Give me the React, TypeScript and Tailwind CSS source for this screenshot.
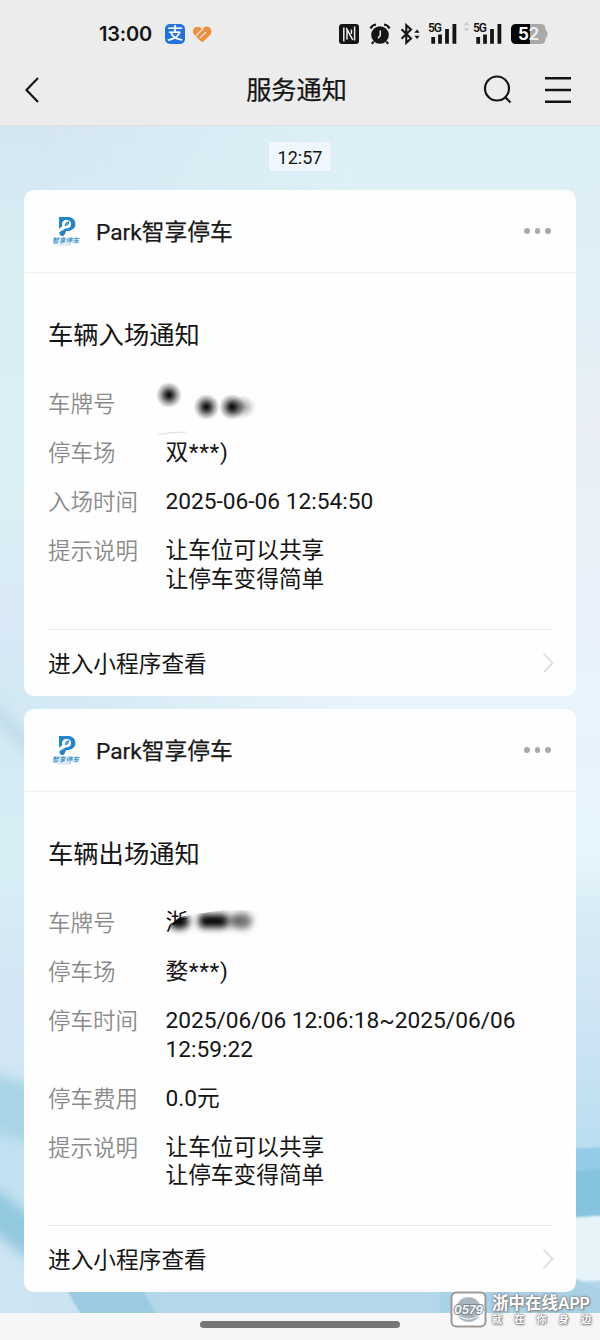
import type { ReactNode } from "react";

type Row = { label: string; lines: string[]; plate?: ReactNode; spaced?: boolean };

const exitTime = ["2025/06/06 12:06:18~2025/06/06", "12:59:22"];
const tips = ["让车位可以共享", "让停车变得简单"];

function Signal() {
  return (
    <svg width="30" height="30" viewBox="0 -4 30 30" className="shrink-0 overflow-visible">
      <text x="0" y="9.4" fontFamily="Roboto" fontWeight="600" fontSize="12" fill="#151515" className="tracking-[-1px]">
        5G
      </text>
      <path d="M5.2 20.7v-6.7M12 20.7v-9.2M19 20.7V6M26.4 20.7V1" stroke="#151515" strokeWidth="3.8" />
    </svg>
  );
}

function StatusBar() {
  return (
    <div className="relative flex h-[68px] items-center pl-[99px]">
      <span className="w-[66px] font-[Inter] text-[20px] font-semibold tracking-[-0.2px] text-[#151515]">13:00</span>
      <span className="flex size-5 items-center justify-center rounded-[5px] bg-[#2272da] text-[16px] leading-none font-medium text-white">
        支
      </span>
      {/* orange heart folded from two ribbons */}
      <svg width="21" height="18" viewBox="0 0 21 18" className="ml-[7px]" fill="none" strokeLinecap="round">
        <path d="M10 4.2C7.5.2 1.5 1.2.9 5.8c-.2 2.4 1.1 4 2.6 5.4l5.2 4.9c1.2 1.1 2.2 1 3.3 0l5.6-5.6c1.5-1.5 2.2-3.1 1.7-5.1C18.2.8 12.5.4 10 4.2z" fill="#ea913f" />
        <path d="M3.2 11.4l8-7.6M8.2 12.6l5.4-5.2" stroke="#ececec" strokeWidth="1.2" />
      </svg>

      <svg width="20" height="20" viewBox="0 0 20 20" className="ml-[126px]">
        <rect width="20" height="20" rx="3" fill="#151515" />
        <path d="M4.8 17.5V3.5M8 15.5V5.5l4.8 8.8M15.6 2.5v14M12.4 5.5v4.5M7.2 3.8l6.6 12" fill="none" stroke="#ececec" strokeWidth="1.5" />
      </svg>
      <svg width="22" height="22" viewBox="0 0 22 22" className="ml-[10px]">
        <circle cx="11" cy="12" r="8.8" fill="#151515" />
        <path d="M1.5 5.5Q3 2 7 1.5M20.5 5.5Q19 2 15 1.5M4.5 18.5L3 21M17.5 18.5L19 21" stroke="#151515" strokeWidth="2.2" fill="none" />
        <path d="M11.3 7.5v5l-2.3 2.8" stroke="#ececec" strokeWidth="1.5" fill="none" />
      </svg>
      <svg width="22" height="22" viewBox="0 0 22 22" className="ml-[9px]">
        <path d="M1.5 6.3l9.5 9.2-4.7 4.3V2.2L11 6.5 1.5 15.7" fill="none" stroke="#151515" strokeWidth="2.1" />
        <path d="M14.3 9.8L17 6.5l2.7 3.3zM14.3 12.8l2.7 3.3 2.7-3.3z" fill="#151515" />
      </svg>
      <div className="ml-[6px] flex items-center">
        <Signal />
        <svg width="7" height="12" viewBox="0 0 7 12" className="mb-4 ml-[5px]">
          <path d="M.5 5.3L3.5 2l3 3.3zM.5 8.2l3 3.3 3-3.3z" fill="#c9c9c9" />
        </svg>
        <div className="ml-[3px]">
          <Signal />
        </div>
      </div>
      <div className="relative ml-[8px] flex h-5 w-[37px] items-center">
        <svg width="37" height="20" viewBox="0 0 37 20" className="absolute inset-0">
          <path d="M18 0h12a4.5 4.5 0 0 1 4.5 4.5V6l2 2v4l-2 2v1.5A4.5 4.5 0 0 1 30 20H18z" fill="#a9a9a9" />
          <path d="M19 0H4.5A4.5 4.5 0 0 0 0 4.5v11A4.5 4.5 0 0 0 4.5 20H19z" fill="#050505" />
        </svg>
        <span className="relative pl-[7px] font-[Inter] text-[17px] leading-5 font-bold tracking-[-0.5px] text-white">
          5<span className="text-[#ececec]">2</span>
        </span>
      </div>
    </div>
  );
}

function NavBar() {
  return (
    <div className="flex h-[58px] items-center border-b border-[#dfe2e4] pb-[14px]">
      <svg width="16" height="28" viewBox="0 0 16 28" className="ml-[24px]" fill="none" stroke="#151515" strokeWidth="2.2">
        <path d="M14 2L2.5 14 14 26" />
      </svg>
      <h1 className="flex-1 pt-[3px] pl-[70px] text-center text-[25.2px] text-[#151515] [-webkit-text-stroke:0.25px_#151515]">服务通知</h1>
      <svg width="30" height="32" viewBox="0 0 30 32" fill="none" stroke="#151515" strokeWidth="2.2">
        <circle cx="14" cy="14.5" r="12" />
        <path d="M22.5 23.5l5 5" />
      </svg>
      <svg width="26" height="28" viewBox="0 0 26 28" className="mr-[29px] ml-[32px]" stroke="#151515" strokeWidth="2.4">
        <path d="M0 2.3h26M0 14h26M0 25.8h26" />
      </svg>
    </div>
  );
}

function ParkLogo() {
  return (
    <svg width="28" height="30" viewBox="0 0 28 30" className="shrink-0">
      <path d="M7 1h9.5a6.9 6.9 0 0 1 0 13.9h-2.3l-1.6 3.6a2.7 2.7 0 0 1-5.1-1.4L7 12z" fill="#2484c8" />
      <path d="M14.8 3.9a4.2 4.2 0 0 1 1 8.3l-2.4.2L6 17.5v-4l4.5-3.6a4.2 4.2 0 0 1 4.3-6z" fill="#fefefe" />
      <path d="M13.2 9.8q0-3.2 3.4-4.2 .6 3.4-3.4 4.2z" fill="#2484c8" stroke="#2484c8" strokeWidth="0.8" />
      <path d="M14.2 8.8l1.4-1.6" stroke="#cfe6ee" strokeWidth="0.7" />
      <path d="M7.4 16.5l2.6-2.2v4.5a2.6 2.6 0 0 1-2.6-2.3z" fill="#2484c8" />
      <text x="0" y="26.8" fontFamily="'Noto Sans CJK SC'" fontWeight="700" fontStyle="italic" fontSize="6.8" textLength="27" fill="#3a91c9">
        智享停车
      </text>
      <path d="M6 28.8h13" stroke="#9bd0e4" strokeWidth="0.7" />
    </svg>
  );
}

/** Smudged-out plate number on the entry card. */
function EntryPlate() {
  return (
    <svg width="120" height="70" viewBox="0 0 120 70" className="absolute -top-[14px] -left-[12px]">
      <defs>
        <radialGradient id="smudge">
          <stop offset="0" stopColor="#000" />
          <stop offset="0.3" stopColor="#000" stopOpacity="0.74" />
          <stop offset="0.65" stopColor="#000" stopOpacity="0.32" />
          <stop offset="1" stopColor="#000" stopOpacity="0" />
        </radialGradient>
      </defs>
      <circle cx="15" cy="19" r="13" fill="url(#smudge)" />
      <circle cx="52.5" cy="31" r="13" fill="url(#smudge)" />
      <circle cx="78" cy="31" r="13" fill="url(#smudge)" />
      <ellipse cx="88" cy="31" rx="14" ry="12" fill="url(#smudge)" opacity="0.4" />
      <path d="M4 58.5q12-2.6 28-2.5-16 .6-28 2.5z" fill="#ccc" stroke="#ddd" strokeWidth="0.6" />
    </svg>
  );
}

/** Smudged-out plate number on the exit card, first character half visible. */
function ExitPlate() {
  return (
    <>
      <span className="block h-full w-[22px] [clip-path:polygon(0_0,100%_0,100%_34%,58%_42%,32%_62%,14%_100%,0_100%)]">浙</span>
      <svg width="100" height="44" viewBox="0 0 100 44" className="absolute -top-2 -left-1">
        <defs>
          <filter id="soften" x="-30%" y="-60%" width="160%" height="220%">
            <feGaussianBlur stdDeviation="3.8" />
          </filter>
          <clipPath id="wipe">
            <path d="M5 34Q8 22 18 16L34 13 62 9H100V44H5z" />
          </clipPath>
        </defs>
        <g clipPath="url(#wipe)">
          <g filter="url(#soften)">
            <ellipse cx="17" cy="20.5" rx="10.5" ry="7.5" />
            <rect x="37" y="13.5" width="28" height="13" rx="4" />
            <ellipse cx="80" cy="20" rx="10" ry="8" opacity="0.55" />
            <rect x="60" y="14" width="16" height="12" opacity="0.3" />
          </g>
        </g>
      </svg>
    </>
  );
}

function NoticeCard({ title, rows }: { title: string; rows: Row[] }) {
  return (
    <section className="rounded-[10px] bg-[#fefefe]">
      <header className="flex h-[83px] items-center border-b border-[#efefef] pr-[25.5px] pl-[28px]">
        <ParkLogo />
        <h2 className="ml-[16px] flex-1 pt-[4px] text-[22.75px] text-[#191919] [-webkit-text-stroke:0.25px_#191919]">
          Park智享停车
        </h2>
        <div className="flex gap-[5px]">
          <i className="size-[5.5px] rounded-full bg-[#a9a9a9]" />
          <i className="size-[5.5px] rounded-full bg-[#a9a9a9]" />
          <i className="size-[5.5px] rounded-full bg-[#a9a9a9]" />
        </div>
      </header>
      <div className="px-6 pt-[45px]">
        <h3 className="text-[25.3px] leading-9 text-[#151515]">{title}</h3>
        <dl className="mt-[36.25px] flex flex-col gap-[20.5px] text-[22.7px] leading-[28.5px]">
          {rows.map((row) => (
            <div key={row.label} className="flex">
              <dt className="w-[117.5px] shrink-0 text-[22.5px] font-[350] text-[#8a8a8a]">{row.label}</dt>
              <dd className={`relative flex-1 whitespace-nowrap text-[#151515] ${row.spaced ? "tracking-[0.6px]" : ""}`}>
                {row.plate}
                {row.lines.map((line) => (
                  <p key={line}>{line}</p>
                ))}
              </dd>
            </div>
          ))}
        </dl>
        <footer className="mt-[34.5px] flex h-[67px] items-center justify-between border-t border-[#ebebeb] text-[22.7px] text-[#151515]">
          <span className="pt-[5px]">进入小程序查看</span>
          <svg width="12" height="22" viewBox="0 0 12 22" className="-mr-[2px]" fill="none" stroke="#dadada" strokeWidth="1.7">
            <path d="M1.5 1.5l9 9.5-9 9.5" />
          </svg>
        </footer>
      </div>
    </section>
  );
}

function Wallpaper() {
  return (
    <svg viewBox="0 126 600 1187" preserveAspectRatio="none" className="absolute inset-0 size-full">
      <defs>
        <linearGradient id="left" x1="0" y1="0" x2="0" y2="1">
          <stop offset="0" stopColor="#d5e6f3" />
          <stop offset="0.12" stopColor="#d8eef3" />
          <stop offset="0.3" stopColor="#dbf0f4" />
          <stop offset="0.42" stopColor="#d9e9f7" />
          <stop offset="0.48" stopColor="#d2e8f3" />
          <stop offset="0.62" stopColor="#d8eff5" />
          <stop offset="0.72" stopColor="#d4e6f5" />
          <stop offset="1" stopColor="#cde4f1" />
        </linearGradient>
        <linearGradient id="right" x1="0" y1="0" x2="0" y2="1">
          <stop offset="0" stopColor="#dcf0f6" />
          <stop offset="0.15" stopColor="#dfeff5" />
          <stop offset="0.25" stopColor="#eaeff6" />
          <stop offset="0.46" stopColor="#e9f3fc" />
          <stop offset="0.62" stopColor="#e6f5fb" />
          <stop offset="0.66" stopColor="#d8ecf5" />
          <stop offset="0.76" stopColor="#cfe4f4" />
          <stop offset="0.85" stopColor="#bcdff0" />
        </linearGradient>
        <linearGradient id="blend">
          <stop offset="0.05" stopColor="#fff" stopOpacity="0" />
          <stop offset="0.6" stopColor="#fff" />
        </linearGradient>
        <mask id="side" maskUnits="userSpaceOnUse" x="0" y="126" width="600" height="1187">
          <rect y="126" width="600" height="1187" fill="url(#blend)" />
        </mask>
        <filter id="haze" x="-50%" y="-50%" width="200%" height="200%">
          <feGaussianBlur stdDeviation="6" />
        </filter>
        <filter id="edge" x="-20%" y="-20%" width="140%" height="140%">
          <feGaussianBlur stdDeviation="1.2" />
        </filter>
      </defs>
      <rect y="126" width="600" height="1187" fill="url(#left)" />
      <rect y="126" width="600" height="1187" fill="url(#right)" mask="url(#side)" />
      <g filter="url(#haze)">
        <path d="M-20 688L44 752V772L-20 705z" fill="#c0dcea" />
        <path d="M-30 1066L50 1090V1150L-30 1125z" fill="#a9d4e7" />
        <path d="M-30 1125L50 1150V1215L-30 1190z" fill="#c2e1f1" />
        <path d="M-30 1170L50 1228V1275L-30 1215z" fill="#93c9df" />
      </g>
      <g filter="url(#edge)">
        <path d="M570 1149L610 1147V1215L570 1218z" fill="#86c3de" />
        <path d="M570 1149L610 1147V1168L570 1172z" fill="#94cce8" />
        <path d="M570 1218L610 1215V1300L570 1280z" fill="#e6f4fa" />
        <path d="M64 1285H460L620 1280V1320H82q-2-18-18-35z" fill="#b4d8ea" />
        <path d="M64 1285H140L160 1320H84z" fill="#9bcbe1" />
        <path d="M570 1276L610 1294V1320H440V1290z" fill="#a9d2e6" />
      </g>
    </svg>
  );
}

function Watermark() {
  return (
    <div className="absolute right-[9px] bottom-[12px] flex items-center gap-[5px]">
      <svg width="37" height="37" viewBox="0 0 37 37">
        <rect x="1.5" y="1.5" width="34" height="34" rx="5" fill="#fff" stroke="#999" strokeWidth="2" />
        <circle cx="18.5" cy="18.5" r="12.5" fill="#a9b5bf" />
        <path d="M8 24q10 8 21 0" stroke="#e5eaee" strokeWidth="1.5" fill="none" />
        <text x="4" y="23" fontFamily="Inter" fontStyle="italic" fontWeight="700" fontSize="12" textLength="29" lengthAdjust="spacingAndGlyphs" fill="#f5f7f8" stroke="#7d8790" strokeWidth="2" paintOrder="stroke">
          0579
        </text>
      </svg>
      <div className="w-[99px] text-white [text-shadow:0_0_2px_#777,0_0_3px_#888,1px_1px_2px_#888]">
        <p className="text-[16.5px] leading-5 font-bold whitespace-nowrap">
          浙中在线<span className="font-[Inter] text-[16px] font-semibold tracking-[-0.2px]">APP</span>
        </p>
        <p className="flex justify-between text-[10px] leading-3 font-bold">
          {["就", "在", "你", "身", "边"].map((c) => (
            <span key={c}>{c}</span>
          ))}
        </p>
      </div>
    </div>
  );
}

export default function App() {
  return (
    <div className="relative flex h-[1340px] w-[600px] flex-col overflow-hidden bg-[#ececec] font-[Roboto,'Noto_Sans_CJK_SC',sans-serif]">
      <StatusBar />
      <NavBar />
      <main className="relative h-[1187px]">
        <Wallpaper />
        <div className="relative flex flex-col px-6 pt-[16px]">
          <time className="mb-[19px] self-center rounded-[4px] bg-[#f0f7fc] px-[9px] pt-[2px] text-[18px] leading-[27px] text-[#151515]">12:57</time>
          <div className="flex flex-col gap-[13px]">
            <NoticeCard
              title="车辆入场通知"
              rows={[
                { label: "车牌号", lines: [], plate: <EntryPlate /> },
                { label: "停车场", lines: ["双***)"], spaced: true },
                { label: "入场时间", lines: ["2025-06-06 12:54:50"] },
                { label: "提示说明", lines: tips },
              ]}
            />
            <NoticeCard
              title="车辆出场通知"
              rows={[
                { label: "车牌号", lines: [], plate: <ExitPlate /> },
                { label: "停车场", lines: ["婺***)"], spaced: true },
                { label: "停车时间", lines: exitTime },
                { label: "停车费用", lines: ["0.0元"] },
                { label: "提示说明", lines: tips },
              ]}
            />
          </div>
        </div>
      </main>
      <div className="flex h-[27px] justify-center bg-[#f6f6f6] pt-[8px]">
        <div className="h-[7px] w-[200px] rounded-full bg-[#777]" />
      </div>
      <Watermark />
    </div>
  );
}
